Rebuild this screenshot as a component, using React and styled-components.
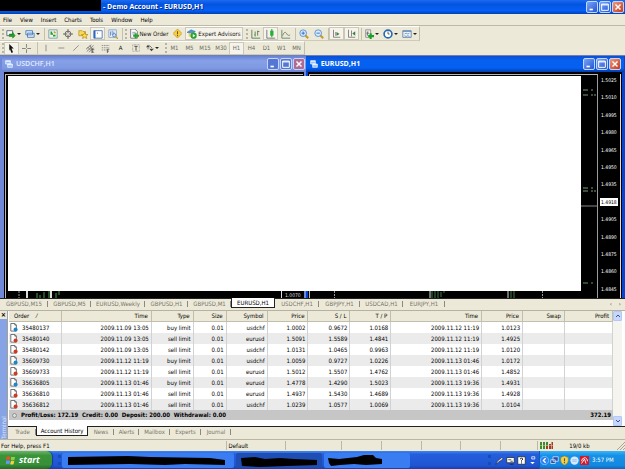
import React, { Fragment } from "react";
import styled, { createGlobalStyle, css } from "styled-components";

const GlobalStyle = createGlobalStyle`
  * {
    box-sizing: border-box;
  }

  body {
    margin: 0;
    background: #ece9d8;
    color: #000;
    font-family: "DejaVu Sans Condensed", "DejaVu Sans", sans-serif;
    font-size: 6px;
    line-height: 8px;
  }

  button {
    margin: 0;
    padding: 0;
    border: 0;
    background: none;
    color: inherit;
    font: inherit;
    white-space: nowrap;
  }
`

const Page = styled.div`
  display: flex;
  flex-direction: column;
  min-height: 100vh;
  overflow: hidden;
`

const TitleBar = styled.header`
  display: flex;
  align-items: center;
  height: 14px;
  padding-right: 1px;
  background: linear-gradient(#1c6cf0, #0453e0 30%, #0560f5 75%, #0340b4);
  color: #fff;

  & h1 {
    flex: 1;
    margin: 0 0 0 2px;
    font-family: "Open Sans", sans-serif;
    font-size: 7px;
    line-height: 10px;
    text-shadow: 1px 1px #0a2a80;
  }
`

const Redacted = styled.div`
  align-self: flex-start;
  width: 101px;
  height: 11px;
  background: #000;
`

const WindowButtons = styled.div`
  display: flex;
  gap: 1px;
`

const WindowButton = styled.button`
  display: flex;
  width: 12px;
  height: 12px;
  border: 1px solid #c5d5f8;
  border-radius: 2px;
  background: ${props => props.$close ? "linear-gradient(135deg, #ec9a80, #c8381a)" : "linear-gradient(135deg, #7ba4f5, #2257d4)"};
  ${props => props.$dim && props.$close && css`background: #b06a94;`}
  ${props => props.$dim && !props.$close && css`background: #5577d4;`}
`

const MenuBar = styled.nav`
  display: flex;
  align-items: center;
  gap: 8px;
  height: 12px;
  padding: 0 3px;
  border-bottom: 1px solid #bdb9a8;
`

const Toolbar = styled.div`
  display: flex;
  align-items: center;
  align-self: flex-start;
  height: ${props => props.$height}px;
  border-top: 1px solid #fff;
  border-right: 1px solid #c2beac;
  border-bottom: 1px solid #cfcbba;
`

const Grip = styled.span`
  width: ${props => props.$width}px;
  height: 10px;
  border-right: 2px dotted #b8b4a2;
`

const Divider = styled.span`
  width: ${props => props.$width}px;
  height: 12px;
  border-right: 1px solid #c4c0ae;
`

const ToolButton = styled.button`
  display: flex;
  align-items: center;
  justify-content: center;
  gap: 1px;
  width: ${props => props.$width || 15}px;
  height: 13px;
  color: ${props => props.$period ? "#6b6960" : "#111"};
  ${props => props.$pressed && css`
    border: 1px solid #ccc8b8;
    background: #f5f3ea;
  `}
`

const Caret = styled.span`
  border: 2px solid transparent;
  border-top-color: #222;
  border-bottom: 0;
`

const Workspace = styled.main`
  position: relative;
  display: flex;
  flex: 1;
  min-height: 240px;
  border-top: 1px solid #6d7fb4;
`

const ChartWindow = styled.section`
  display: flex;
  flex-direction: column;
  flex: ${props => props.$grow} 1 0;
  padding: 0 ${props => props.$active ? 3 : 2}px 0 ${props => props.$active ? 2 : 4}px;
  background: ${props => props.$active ? "#0545cf" : "#7088d8"};
`

const ChartTitle = styled.header`
  display: flex;
  align-items: center;
  gap: 3px;
  height: 16px;
  margin: 0 -2px;
  padding: 0 ${props => props.$active ? 3 : 1}px 0 ${props => props.$active ? 4 : 3}px;
  background: ${props => props.$active ? "linear-gradient(#0c4fd0, #0561f2 30%, #0560f0 75%, #023cae)" : "linear-gradient(#6880d2, #86a1e8 30%, #7f99e2 75%, #6a82d0)"};
  color: ${props => props.$active ? "#fff" : "#e2eaff"};

  & h2 {
    flex: 1;
    margin: 0;
    font-family: "Open Sans", sans-serif;
    font-size: 7px;
    font-weight: ${props => props.$active ? "bold" : "600"};
  }
`

const ChartBody = styled.div`
  display: flex;
  justify-content: flex-end;
  flex: 1;
  padding-top: 1px;
  background: #000;
  border: 1px solid #000;
  border-bottom: 0;
`

const ChartFrame = styled.div`
  display: flex;
  align-items: flex-end;
  justify-content: space-between;
  flex: 1;
  overflow: hidden;
  border-top: 1px solid #b8b8b8;
  border-left: 1px solid #b8b8b8;
  border-right: ${props => props.$scale ? "1px solid #9c9c9c" : "0"};
`

const PriceScale = styled.ol`
  display: flex;
  flex-direction: column;
  justify-content: space-between;
  width: 23px;
  margin: 0;
  padding: 2px 0 5px 2px;
  border-right: 1px solid #dde;
  list-style: none;
  color: #fff;
  font-size: 5px;
  line-height: 8px;
`

const PriceMark = styled.li`
  padding-left: 1px;
  ${props => props.$current && css`
    margin-right: 2px;
    background: #fff;
    color: #000;
  `}
`

// blank sheet lying over both chart windows
const Cover = styled.div`
  position: absolute;
  top: 20px;
  right: 44px;
  bottom: 7px;
  left: 8px;
  background: #fff;
`

const TabStrip = styled.div`
  display: flex;
  align-items: flex-start;
  height: ${props => props.$height}px;
  padding-left: ${props => props.$inset}px;
  border-top: 1px solid #222;
  color: #77746a;
`

const Tab = styled.button`
  position: relative;
  width: ${props => props.$width}px;
  height: 10px;

  &::after {
    content: "";
    position: absolute;
    right: 0;
    top: 2px;
    height: 6px;
    border-right: 1px solid #8b887c;
  }

  ${props => props.$active && css`
    margin-top: -1px;
    border: 1px solid #222;
    border-top: 0;
    background: #fff;
    color: #000;

    &::after {
      display: none;
    }
  `}
`

const TabArrows = styled.div`
  display: flex;
  gap: 7px;
  margin: 1px 4px 0 auto;
  color: #333;
`

const Terminal = styled.section`
  display: flex;
  border-top: 1px solid #b5b2a4;
`

const TerminalSide = styled.div`
  display: flex;
  flex-direction: column;
  width: 8px;
  border-right: 1px solid #a5a294;
`

const SideClose = styled.button`
  height: 8px;
  font-size: 7px;
  font-weight: bold;
`

const SideLabel = styled.div`
  flex: 1;
  background: #86a3e6;
  color: #dbe5ff;
  writing-mode: vertical-rl;
  transform: rotate(180deg);
  line-height: 7px;
`

const TerminalBody = styled.div`
  flex: 1;
  min-width: 0;
`

const TableArea = styled.div`
  display: flex;
  padding-right: 3px;
  padding-left: 1px;
  background: #fff;
`

const OrderTable = styled.table`
  flex: 1;
  table-layout: fixed;
  border-collapse: separate;
  border-spacing: 0;
  margin-bottom: 6px;

  & th,
  & td {
    height: 11px;
    padding: 0 2px 0 0;
    border-right: 1px solid #d2d2d2;
    overflow: hidden;
    text-align: right;
    font-weight: normal;
    white-space: nowrap;
  }

  & th {
    padding-right: 3px;
    border-bottom: 1px solid #bbb8a8;
    border-color: #c2beac;
    background: #ece9d8;
  }

  & th:first-child {
    padding-left: 5px;
    text-align: left;
  }

  & tbody tr:nth-child(even) {
    background: #ebebeb;
  }

  & tfoot td {
    height: 10px;
    border: 0;
    background: #c6c6c6;
    font-weight: bold;
  }
`

const OrderCell = styled.div`
  display: flex;
  align-items: center;
  gap: 4px;
  padding-left: ${props => props.$total ? 3 : 1}px;
`

const ScrollBar = styled.div`
  display: flex;
  flex-direction: column;
  justify-content: space-between;
  width: 9px;
  background: #f5f4ee;

  & button {
    display: flex;
    align-items: center;
    justify-content: center;
    height: 10px;
    border: 1px solid #b4c8f6;
    border-radius: 1px;
    background: #c6d6fc;
  }
`

const StatusBar = styled.footer`
  display: flex;
  align-items: center;
  height: 12px;
  border-top: 1px solid #b9b6a6;
`

const StatusCell = styled.span`
  display: flex;
  align-items: center;
  flex: ${props => props.$grow} 1 0;
  height: 9px;
  padding-left: ${props => props.$first ? 0 : 2}px;
  border-left: 1px solid ${props => props.$first ? "transparent" : "#bcb8a6"};
`

const Traffic = styled.span`
  margin-left: 16px;
`

const TaskBar = styled.footer`
  display: flex;
  align-items: stretch;
  height: 18px;
  background: linear-gradient(#3f86f0, #245edb 18%, #1f55d4 80%, #1941a5);
`

const StartButton = styled.button`
  display: flex;
  align-items: center;
  gap: 3px;
  width: 52px;
  padding-left: 6px;
  border-radius: 0 6px 6px 0;
  background: linear-gradient(#6db36b, #3a9438 25%, #37903a 75%, #246a28);
  box-shadow: 1px 0 1px #123f90;
  color: #fff;
  font-family: "Open Sans", sans-serif;
  font-size: 9px;
  font-style: italic;
  font-weight: bold;
`

const TaskGrip = styled.span`
  width: ${props => props.$width}px;
  margin: 4px 0;
  border-right: 3px dotted #184bb8;
`

const TaskButton = styled.button`
  display: flex;
  align-items: center;
  width: ${props => props.$width}px;
  margin: 2px 1px 1px;
  padding-left: 4px;
  border-radius: 2px;
  background: ${props => props.$pressed ? "#1e4db4" : "#3a7cf2"};
`

const Tray = styled.div`
  display: flex;
  align-items: center;
  gap: 2px;
  padding-left: 4px;
`

const TrayLight = styled.div`
  display: flex;
  align-items: center;
  flex: 1;
  gap: 1px;
  margin-left: 2px;
  border-left: 1px solid #0d5bb8;
  background: linear-gradient(#3bb4f5, #1591e8 25%, #1388e0 80%, #0e66ba);
  color: #fff;

  & time {
    margin-left: 2px;
    white-space: nowrap;
  }
`

const drawings = {
  chartPlus: (
    <Fragment>
      <path d="M1 2h7v6H1z" fill="#f4fff4" stroke="#557" />
      <path d="M4 7h4M8 4l3 4-3 3V9H4V6h4z" fill="#23a42c" stroke="#14781d" strokeWidth="0.6" />
    </Fragment>
  ),
  profiles: <path d="M1 2h8v5H1zM3 5h8v5H3z" fill="#dbe9fc" stroke="#4679b5" />,
  market: (
    <Fragment>
      <path d="M1 1h10v10H1z" fill="#e8f5ea" stroke="#7598a5" />
      <path d="M3 4h2M3 6h3M6 8h3" stroke="#2c9b33" strokeWidth="2" />
      <path d="M7 3l2 2" stroke="#caa421" strokeWidth="2" />
    </Fragment>
  ),
  target: (
    <g fill="none" stroke="#555">
      <circle cx="6" cy="6" r="3.5" />
      <path d="M6 0v5M6 7v5M0 6h5M7 6h5" />
    </g>
  ),
  favorites: (
    <Fragment>
      <path d="M1 2h4l1 1h3v5H1z" fill="#f8d95d" stroke="#b38b19" strokeWidth="0.8" />
      <path d="M8 4l1 2.5 3 .2-2.2 1.8.8 3L8 9.8l-2.5 1.7.7-3L4 6.7l3-.2z" fill="#ffe03b" stroke="#a87c10" strokeWidth="0.7" />
    </Fragment>
  ),
  terminal: (
    <Fragment>
      <path d="M1 2h10v9H1z" fill="#fff" stroke="#3b6fae" />
      <path d="M2 2v9" stroke="#2d68c0" strokeWidth="2" />
      <path d="M5 5h1" stroke="#444" />
    </Fragment>
  ),
  tester: (
    <Fragment>
      <path d="M1 1h9v9H1z" fill="#eef5ff" stroke="#7f9fc8" />
      <path d="M3 3v5M5 2v5M7 3v3" stroke="#5a83b5" />
      <circle cx="7.5" cy="7.5" r="2" fill="#cfe6ff" stroke="#4a78b0" />
      <path d="M9 9l3 3" stroke="#d0a128" strokeWidth="1.5" />
    </Fragment>
  ),
  newOrder: (
    <Fragment>
      <path d="M2 0h5l3 3v8H2z" fill="#fff" stroke="#667" />
      <path d="M4 4h4M4 6h3" stroke="#88a" />
      <path d="M8 5v6M5 8h7" stroke="#1fa52b" strokeWidth="2.5" />
    </Fragment>
  ),
  warning: (
    <Fragment>
      <path d="M6 0l6 6-6 6-6-6z" fill="#f7cf3c" stroke="#b3861a" strokeWidth="0.8" />
      <path d="M6 3v4M6 8v1.5" stroke="#6d4c08" strokeWidth="1.3" />
    </Fragment>
  ),
  expert: (
    <Fragment>
      <path d="M0 4l5-3 5 2-4 3z" fill="#4f99d0" stroke="#2b6a9d" strokeWidth="0.6" />
      <path d="M2 5v4l4 1V5z" fill="#f2c766" />
      <circle cx="8" cy="8" r="3.7" fill="#25a535" />
      <path d="M7 6l3 2-3 2z" fill="#fff" />
    </Fragment>
  ),
  bars: <path d="M1 1v10h10M5 3v6M4 7h1M8 2v6M8 3h2" fill="none" stroke="#48754b" />,
  candles: (
    <Fragment>
      <path d="M1 1v10h10" fill="none" stroke="#666" />
      <path d="M7 0v10" stroke="#167a20" />
      <path d="M5 2h4v6H5z" fill="#24b234" />
    </Fragment>
  ),
  line: <path d="M1 1v10h10M2 8c2-6 4-4 5-2s3 2 4 1" fill="none" stroke="#5d7c5d" />,
  zoomIn: (
    <Fragment>
      <path d="M7 7l4 4" stroke="#c79b25" strokeWidth="2.5" />
      <circle cx="5" cy="5" r="4" fill="#d5ebff" stroke="#4e86ca" />
      <path d="M3 5h4M5 3v4" stroke="#2563b4" />
    </Fragment>
  ),
  zoomOut: (
    <Fragment>
      <path d="M7 7l4 4" stroke="#c79b25" strokeWidth="2.5" />
      <circle cx="5" cy="5" r="4" fill="#d5ebff" stroke="#4e86ca" />
      <path d="M3 5h4" stroke="#2563b4" />
    </Fragment>
  ),
  scroll: (
    <Fragment>
      <path d="M2 1v10h9M5 4v5" fill="none" stroke="#666" />
      <path d="M6 4l4 2.5L6 9z" fill="#427c4a" />
    </Fragment>
  ),
  shift: (
    <Fragment>
      <path d="M2 1v10h9M6 2v8" fill="none" stroke="#666" />
      <path d="M11 3v6L7 6z" fill="#427c4a" />
    </Fragment>
  ),
  indicators: (
    <Fragment>
      <path d="M2 1h6v9H2z" fill="#eee" stroke="#888" />
      <path d="M5 3c-1 0-1 1-1 5M3 5h3" stroke="#555" fill="none" />
      <path d="M8 5v7M5 8.5h7" stroke="#19a126" strokeWidth="2.5" />
    </Fragment>
  ),
  clock: (
    <Fragment>
      <circle cx="6" cy="6" r="4.7" fill="#fff" stroke="#2869b0" strokeWidth="2" />
      <path d="M6 3v3h2" fill="none" stroke="#444" />
    </Fragment>
  ),
  template: (
    <Fragment>
      <path d="M1 2h10v8H1z" fill="#eef5ff" stroke="#5679a0" />
      <path d="M1 3h10M3 6l2-1 2 1 2-1M3 8l2 1 2-1 2 1" fill="none" stroke="#678ab5" />
    </Fragment>
  ),
  cursor: <path d="M3 0l6 6H6l2 5-2 1-2-5-1 2z" fill="#111" />,
  cross: <path d="M6 0v5M6 7v5M0 6h5M7 6h5" stroke="#666" />,
  vertical: <path d="M6 1v10" stroke="#666" />,
  horizontal: <path d="M2 6h9" stroke="#666" />,
  slope: <path d="M2 10l8-8" stroke="#666" />,
  channel: (
    <Fragment>
      <path d="M0 7l7-6M1 10l9-8M4 11l6-6M2 4l4 4M5 2l3 5" stroke="#555" strokeWidth="0.9" />
      <path d="M11 7H8v5h3M8 9.5h2" fill="none" stroke="#333" />
    </Fragment>
  ),
  fibo: (
    <Fragment>
      <path d="M1 2h10M1 5h10M1 8h7" stroke="#777" strokeDasharray="2 1" />
      <path d="M11 7H8.5v5M8.5 9.5h2" fill="none" stroke="#444" />
    </Fragment>
  ),
  label: (
    <Fragment>
      <path d="M1 1h10v10H1z" fill="none" stroke="#777" strokeDasharray="1 1" />
      <path d="M3.5 3.5h5M6 3.5V10" stroke="#333" strokeWidth="1.2" />
    </Fragment>
  ),
  arrows: (
    <Fragment>
      <path d="M3 1l3 4H0zM8 11l4-4H5z" fill="#444" />
      <path d="M5 2l4 4M3 5v3" stroke="#444" />
    </Fragment>
  ),
  windows: (
    <Fragment>
      <path d="M1 1h7v5H1zM4 6h7v5H4z" fill="#9cc0ff" stroke="#fff" />
      <path d="M1 2h7M4 7h7" stroke="#fff" />
    </Fragment>
  ),
  minimize: <path d="M3 9h4" stroke="#fff" strokeWidth="2" />,
  maximize: <path d="M2 2.5h8V10H2zM2 3.5h8" fill="none" stroke="#fff" strokeWidth="1.2" />,
  close: <path d="M3 3l6 6M9 3l-6 6" stroke="#fff" strokeWidth="1.7" />,
  up: <path d="M2 8l4-4 4 4" fill="none" stroke="#3a5586" strokeWidth="2" />,
  down: <path d="M2 4l4 4 4-4" fill="none" stroke="#3a5586" strokeWidth="2" />,
  flag: (
    <Fragment>
      <path d="M1 2q2-1 4 0v4Q3 5 0 6z" fill="#e8512b" />
      <path d="M6 2q3 1 5 0l-1 4q-2 1-4 0z" fill="#8ad045" />
      <path d="M0 7q3-1 5 0l-1 4q-2-1-4 0z" fill="#5c9af5" />
      <path d="M6 7q2 1 4 0l-1 4q-2 1-4 0z" fill="#fbd23a" />
    </Fragment>
  ),
  pen: <path d="M1 11l2-4 6-5 2 2-6 4z" fill="#ddd" stroke="#224" strokeWidth="0.8" />,
  monitor: (
    <Fragment>
      <path d="M1 2h10v7H1z" fill="#fff" stroke="#222" />
      <path d="M3 5h4M6 7h3M5 11h5" stroke="#222" />
    </Fragment>
  ),
  help: (
    <Fragment>
      <path d="M1 1h10v10H1z" fill="#fff" stroke="#222" />
      <path d="M4 4q2-2 4 0L6 6v1.5M6 8.5V10" fill="none" stroke="#222" strokeWidth="1.3" />
    </Fragment>
  ),
  restore: (
    <Fragment>
      <path d="M5 1h4v3H5z" fill="none" stroke="#fff" />
      <path d="M3 8l3 3 3-3z" fill="#fff" />
    </Fragment>
  ),
  chevron: (
    <Fragment>
      <circle cx="6" cy="6" r="5.5" fill="#2f7ff0" stroke="#8cc8ff" />
      <path d="M7.5 3l-3 3 3 3" fill="none" stroke="#fff" strokeWidth="1.7" />
    </Fragment>
  ),
  network: <path d="M4 1h7v6H4zM1 5h6v5H1z" fill="#274fa8" stroke="#d9e8ff" />,
  shield: (
    <Fragment>
      <path d="M6 0l5 2v4q0 4-5 6-5-2-5-6V2z" fill="#f4d247" stroke="#a07c18" strokeWidth="0.7" />
      <path d="M6 3v4M6 8v1.5" stroke="#555" strokeWidth="1.5" />
    </Fragment>
  ),
  globe: (
    <Fragment>
      <circle cx="6" cy="6" r="5.5" fill="#d7e9ff" />
      <path d="M3 5h6M3 7h6" stroke="#8ab2e6" />
    </Fragment>
  ),
  umbrella: (
    <Fragment>
      <path d="M0 0h12v12H0z" fill="#d2182b" />
      <path d="M2 7q0-4 5-5 3 2 3 5M6 4l2 6M2 10l4-6" fill="none" stroke="#fff" strokeWidth="1.2" />
    </Fragment>
  ),
};

const Icon = ({ name, size = 10 }) => (
  <svg width={size} height={size} viewBox="0 0 12 12" aria-hidden="true">{drawings[name]}</svg>
);

const OrderIcon = ({ side }) => (
  <svg width="8" height="9" viewBox="0 0 10 11" aria-hidden="true">
    <path d="M1 .5h5l2 2V10H1z" fill="#fff" stroke="#555" />
    <path d="M6 .5v2h2" fill="none" stroke="#555" />
    <circle cx="7" cy="8" r="2.5" fill={side === "buy" ? "#1d87c4" : "#cf3a24"} />
  </svg>
);

const Controls = ({ dim }) => (
  <WindowButtons>
    <WindowButton $dim={dim} aria-label="Minimize"><Icon name="minimize" /></WindowButton>
    <WindowButton $dim={dim} aria-label="Maximize"><Icon name="maximize" /></WindowButton>
    <WindowButton $dim={dim} $close aria-label="Close"><Icon name="close" /></WindowButton>
  </WindowButtons>
);

const Tool = ({ icon, text, width, menu, pressed, period, size }) => (
  <ToolButton $width={width} $pressed={pressed} $period={period} aria-label={text || icon}>
    {icon && <Icon name={icon} size={size} />}
    {text}
    {menu && <Caret />}
  </ToolButton>
);

const menus = ["File", "View", "Insert", "Charts", "Tools", "Window", "Help"];

const periods = ["M1", "M5", "M15", "M30", "H1", "H4", "D1", "W1", "MN"];

const chartTabs = [
  ["GBPUSD,M15", 48], ["GBPUSD,M5", 43], ["EURUSD,Weekly", 54], ["GBPUSD,H1", 43],
  ["GBPUSD,M1", 43], ["EURUSD,H1", 44], ["USDCHF,H1", 44], ["GBPJPY,H1", 41],
  ["USDCAD,H1", 43], ["EURJPY,H1", 42],
];

const terminalTabs = [
  ["Trade", 27], ["Account History", 52], ["News", 26], ["Alerts", 25],
  ["Mailbox", 31], ["Experts", 31], ["Journal", 30],
];

const prices = [
  "1.5025", "1.5010", "1.4995", "1.4980", "1.4965", "1.4950", "1.4935",
  "1.4918", "1.4905", "1.4890", "1.4875", "1.4860", "1.4845",
];

const columns = [
  ["Order", 53], ["Time", 90], ["Type", 42], ["Size", 33], ["Symbol", 41], ["Price", 41],
  ["S / L", 42], ["T / P", 41], ["Time", 91], ["Price", 41], ["Swap", 42], ["Profit", 48],
];

const orders = [
  ["35480137", "2009.11.09 13:05", "buy limit", "0.01", "usdchf", "1.0002", "0.9672", "1.0168", "2009.11.12 11:19", "1.0123"],
  ["35480140", "2009.11.09 13:05", "sell limit", "0.01", "eurusd", "1.5091", "1.5589", "1.4841", "2009.11.12 11:19", "1.4925"],
  ["35480142", "2009.11.09 13:05", "sell limit", "0.01", "usdchf", "1.0131", "1.0465", "0.9963", "2009.11.12 11:19", "1.0120"],
  ["35609730", "2009.11.12 11:19", "buy limit", "0.01", "usdchf", "1.0059", "0.9727", "1.0226", "2009.11.13 01:46", "1.0172"],
  ["35609733", "2009.11.12 11:19", "sell limit", "0.01", "eurusd", "1.5012", "1.5507", "1.4762", "2009.11.13 01:46", "1.4852"],
  ["35636805", "2009.11.13 01:46", "buy limit", "0.01", "eurusd", "1.4778", "1.4290", "1.5023", "2009.11.13 19:36", "1.4931"],
  ["35636810", "2009.11.13 01:46", "sell limit", "0.01", "eurusd", "1.4937", "1.5430", "1.4689", "2009.11.13 19:36", "1.4928"],
  ["35636812", "2009.11.13 01:46", "sell limit", "0.01", "usdchf", "1.0239", "1.0577", "1.0069", "2009.11.13 19:36", "1.0104"],
];

const Orders = () => (
  <OrderTable>
    <colgroup>
      {columns.map(([, width], index) => <col key={index} style={{ width: `${width / 6.05}%` }} />)}
    </colgroup>
    <thead>
      <tr>
        {columns.map(([name], index) => (
          <th key={index}>{name}{index === 0 && <Fragment>&nbsp;&nbsp;&nbsp;&nbsp;⁄</Fragment>}</th>
        ))}
      </tr>
    </thead>
    <tbody>
      {orders.map(order => (
        <tr key={order[0]}>
          {columns.map((column, index) => (
            <td key={index}>
              {index === 0
                ? <OrderCell><OrderIcon side={order[2].split(" ")[0]} />{order[0]}</OrderCell>
                : order[index]}
            </td>
          ))}
        </tr>
      ))}
    </tbody>
    <tfoot>
      <tr>
        <td colSpan={11}>
          <OrderCell $total>
            <svg width="5" height="5" viewBox="0 0 6 6" aria-hidden="true">
              <circle cx="3" cy="3" r="2.4" fill="#ddd" stroke="#888" />
            </svg>
            Profit/Loss: 172.19&nbsp; Credit: 0.00&nbsp; Deposit: 200.00&nbsp; Withdrawal: 0.00
          </OrderCell>
        </td>
        <td>372.19</td>
      </tr>
    </tfoot>
  </OrderTable>
);

const App = () => (
  <Page>
    <GlobalStyle />
    <TitleBar>
      <Redacted />
      <h1>- Demo Account - EURUSD,H1</h1>
      <Controls />
    </TitleBar>
    <MenuBar>
      {menus.map(menu => <button key={menu}>{menu}</button>)}
    </MenuBar>
    <Toolbar $height={15}>
      <Grip $width={4} />
      <Tool icon="chartPlus" menu width={19} />
      <Tool icon="profiles" menu width={19} />
      <Divider $width={3} />
      <Tool icon="market" />
      <Tool icon="target" />
      <Tool icon="favorites" />
      <Tool icon="terminal" pressed />
      <Tool icon="tester" />
      <Divider $width={3} />
      <Grip $width={4} />
      <Tool icon="newOrder" text="New Order" width={43} />
      <Tool icon="warning" size={9} />
      <Tool icon="expert" text="Expert Advisors" width={58} pressed />
      <Grip $width={5} />
      <Tool icon="bars" />
      <Tool icon="candles" pressed />
      <Tool icon="line" />
      <Divider $width={3} />
      <Tool icon="zoomIn" />
      <Tool icon="zoomOut" />
      <Divider $width={3} />
      <Tool icon="scroll" pressed size={9} />
      <Tool icon="shift" pressed size={9} />
      <Divider $width={3} />
      <Tool icon="indicators" menu width={19} />
      <Tool icon="clock" menu width={19} />
      <Tool icon="template" menu width={19} />
    </Toolbar>
    <Toolbar $height={14}>
      <Grip $width={4} />
      <Tool icon="cursor" pressed size={9} />
      <Tool icon="cross" size={9} />
      <Divider $width={4} />
      <Tool icon="vertical" size={8} />
      <Tool icon="horizontal" size={8} />
      <Tool icon="slope" size={8} />
      <Tool icon="channel" size={9} />
      <Tool icon="fibo" size={9} />
      <Tool text="A" />
      <Tool icon="label" size={8} />
      <Tool icon="arrows" size={8} menu width={19} />
      <Grip $width={5} />
      {periods.map(period => (
        <Tool key={period} text={period} period pressed={period === "H1"} width={period.length > 2 ? 16 : 15} />
      ))}
    </Toolbar>

    <Workspace>
      <ChartWindow $grow={305}>
        <ChartTitle>
          <Icon name="windows" size={8} />
          <h2>USDCHF,H1</h2>
          <Controls dim />
        </ChartTitle>
        <ChartBody>
          <ChartFrame>
            <svg width="60" height="7" aria-hidden="true">
              <path d="M13 0v7" stroke="#999" strokeDasharray="2 1" />
              <path d="M21 0v7M45 0v7" stroke="#ddd" strokeWidth="2" />
              <path d="M31 2v5M34 4v3M38 1v6M43 0v7M50 2v5M53 0v4" stroke="#4b9a4d" />
            </svg>
            <svg width="22" height="7" aria-hidden="true">
              <path d="M.5 0v7" stroke="#ddd" />
              <text x="4" y="6" fill="#ddd" fontSize="5">1.0070</text>
            </svg>
          </ChartFrame>
        </ChartBody>
      </ChartWindow>
      <ChartWindow $active $grow={320}>
        <ChartTitle $active>
          <Icon name="windows" size={8} />
          <h2>EURUSD,H1</h2>
          <Controls />
        </ChartTitle>
        <ChartBody>
          <ChartFrame $scale>
            <svg width="240" height="7" aria-hidden="true">
              <path d="M24.5 0v7M232.5 0v7" stroke="#999" strokeDasharray="2 1" />
              <path d="M120 0v7M198 0v7" stroke="#ddd" />
              <path d="M122 0v7M125 0v7M128 0v7M131 1v5M134 0v2M201 0v7M204 0v7" stroke="#3f7a41" />
            </svg>
            <svg width="18" height="222" viewBox="0 0 18 222" aria-hidden="true">
              <path d="M4 14h5M12 14h2M4 19h5M12 19h2M15 19h2M4 112h5M12 112h2M4 115h5M12 115h2M15 115h2" stroke="#7d9a7e" />
              <path d="M0 130h18" stroke="#888" />
              <path d="M4 207h5M12 207h2" stroke="#5a9a5c" />
            </svg>
          </ChartFrame>
          <PriceScale>
            {prices.map(price => <PriceMark key={price} $current={price === "1.4918"}>{price}</PriceMark>)}
          </PriceScale>
        </ChartBody>
      </ChartWindow>
      <Cover />
    </Workspace>

    <TabStrip $height={12} $inset={0}>
      {chartTabs.map(([name, width]) => (
        <Tab key={name} $width={width} $active={name === "EURUSD,H1"}>{name}</Tab>
      ))}
      <TabArrows>
        <button aria-label="Previous">‹</button>
        <button aria-label="Next">›</button>
      </TabArrows>
    </TabStrip>

    <Terminal>
      <TerminalSide>
        <SideClose aria-label="Close terminal">×</SideClose>
        <SideLabel>Terminal</SideLabel>
      </TerminalSide>
      <TerminalBody>
        <TableArea>
          <Orders />
          <ScrollBar>
            <button aria-label="Scroll up"><Icon name="up" size={6} /></button>
            <button aria-label="Scroll down"><Icon name="down" size={6} /></button>
          </ScrollBar>
        </TableArea>
        <TabStrip $height={13} $inset={1}>
          {terminalTabs.map(([name, width]) => (
            <Tab key={name} $width={width} $active={name === "Account History"}>{name}</Tab>
          ))}
        </TabStrip>
      </TerminalBody>
    </Terminal>

    <StatusBar>
      <StatusCell $first $grow={234}>For Help, press F1</StatusCell>
      <StatusCell $grow={59}>Default</StatusCell>
      <StatusCell $grow={55} />
      <StatusCell $grow={39} />
      <StatusCell $grow={38} />
      <StatusCell $grow={38} />
      <StatusCell $grow={38} />
      <StatusCell $grow={36} />
      <StatusCell $grow={80}>
        <svg width="13" height="7" aria-hidden="true">
          <path d="M1 0v7M4 0v7M7 0v4" stroke="#3b8a2c" strokeWidth="2" />
          <path d="M7 4v3M10 2v5M12.5 0v7" stroke="#a33a26" strokeWidth="2" />
          <path d="M0 3.5h13" stroke="#ddd3a0" strokeWidth="0.5" />
        </svg>
        <Traffic>19/0 kb</Traffic>
      </StatusCell>
      <svg width="8" height="9" aria-hidden="true">
        <path d="M0 9l8-8M3 9l5-5M6 9l2-2" stroke="#aaa695" />
      </svg>
    </StatusBar>

    <TaskBar>
      <StartButton><Icon name="flag" />start</StartButton>
      <TaskGrip $width={9} />
      <TaskButton $width={172} aria-label="Window 1">
        <svg width="164" height="11" aria-hidden="true">
          <path d="M2 2l60-1 22 1 60 1 15 2v5l-40-1-20 1-35-1-62 1z" />
        </svg>
      </TaskButton>
      <TaskButton $width={86} $pressed aria-label="Window 2">
        <svg width="79" height="12" aria-hidden="true">
          <path d="M1 3l14-1 10 2 15-1 14 1 23 1v5l-30 1-27 1-18-1z" />
        </svg>
      </TaskButton>
      <TaskButton $width={86} aria-label="Window 3">
        <svg width="56" height="12" aria-hidden="true">
          <path d="M0 3l11 1 9-1 9-1 7-2h9l3 3 6 1v5l-16 1-12-1-14 1-9 1-2-3z" />
        </svg>
      </TaskButton>
      <TaskGrip $width={80} />
      <Tray>
        <Icon name="pen" size={9} />
        <Icon name="monitor" size={9} />
        <Icon name="help" size={9} />
        <Icon name="restore" size={9} />
      </Tray>
      <TrayLight>
        <Icon name="chevron" size={9} />
        <Icon name="network" size={9} />
        <Icon name="shield" size={9} />
        <Icon name="globe" size={9} />
        <Icon name="umbrella" size={9} />
        <time>3:57 PM</time>
      </TrayLight>
    </TaskBar>
  </Page>
);

export default App;
